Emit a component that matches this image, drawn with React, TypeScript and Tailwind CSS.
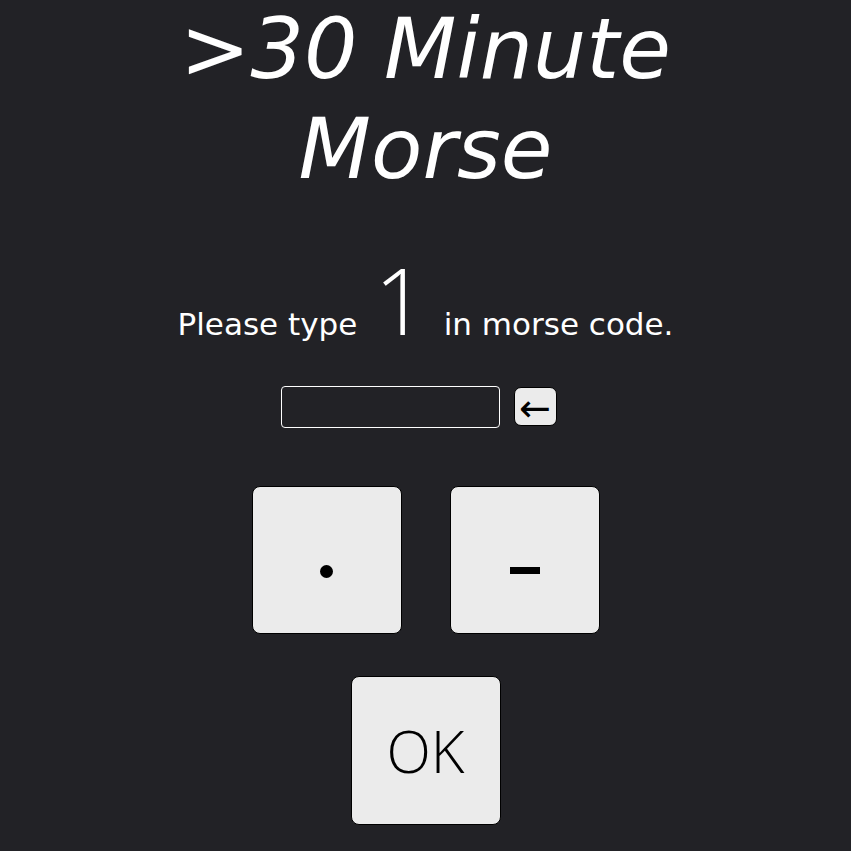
export default function App() {
  return (
    <div className="min-h-screen w-full bg-[#222226] text-white flex flex-col items-center font-['DejaVu_Sans',sans-serif]">
      <h1 className="text-center italic font-normal text-[84px] leading-[100px] mt-[-1px]">
        &gt;30 Minute
        <br />
        Morse
      </h1>

      <p className="mt-[55px] flex items-baseline text-[31px] font-normal">
        <span>Please type</span>
        <span className="mx-[17px] text-[92px] font-['Open_Sans',sans-serif] font-light leading-none">1</span>
        <span>in morse code.</span>
      </p>

      <div className="mt-[38px] mr-[14px] flex items-center gap-[14px]">
        <input
          type="text"
          className="w-[219px] h-[42px] bg-transparent border border-white rounded-[4px] px-2 text-white outline-none"
        />
        <button className="w-[43px] h-[39px] bg-[#ebebeb] text-black border border-black rounded-[7px] text-[38px] leading-none flex items-center justify-center pt-[2px]">
          ←
        </button>
      </div>

      <div className="mt-[58px] flex gap-[48px]">
        <button className="w-[150px] h-[148px] bg-[#ebebeb] text-black border border-black rounded-[8px] flex items-center justify-center">
          <span className="block w-[13px] h-[13px] rounded-full bg-black mt-[24px]" />
        </button>
        <button className="w-[150px] h-[148px] bg-[#ebebeb] text-black border border-black rounded-[8px] flex items-center justify-center">
          <span className="block w-[30px] h-[7px] bg-black mt-[22px]" />
        </button>
      </div>

      <div className="mt-[42px]">
        <button className="w-[150px] h-[149px] bg-[#ebebeb] text-black border border-black rounded-[8px] flex items-center justify-center text-[58px] font-['Open_Sans',sans-serif] font-light">
          OK
        </button>
      </div>
    </div>
  );
}
